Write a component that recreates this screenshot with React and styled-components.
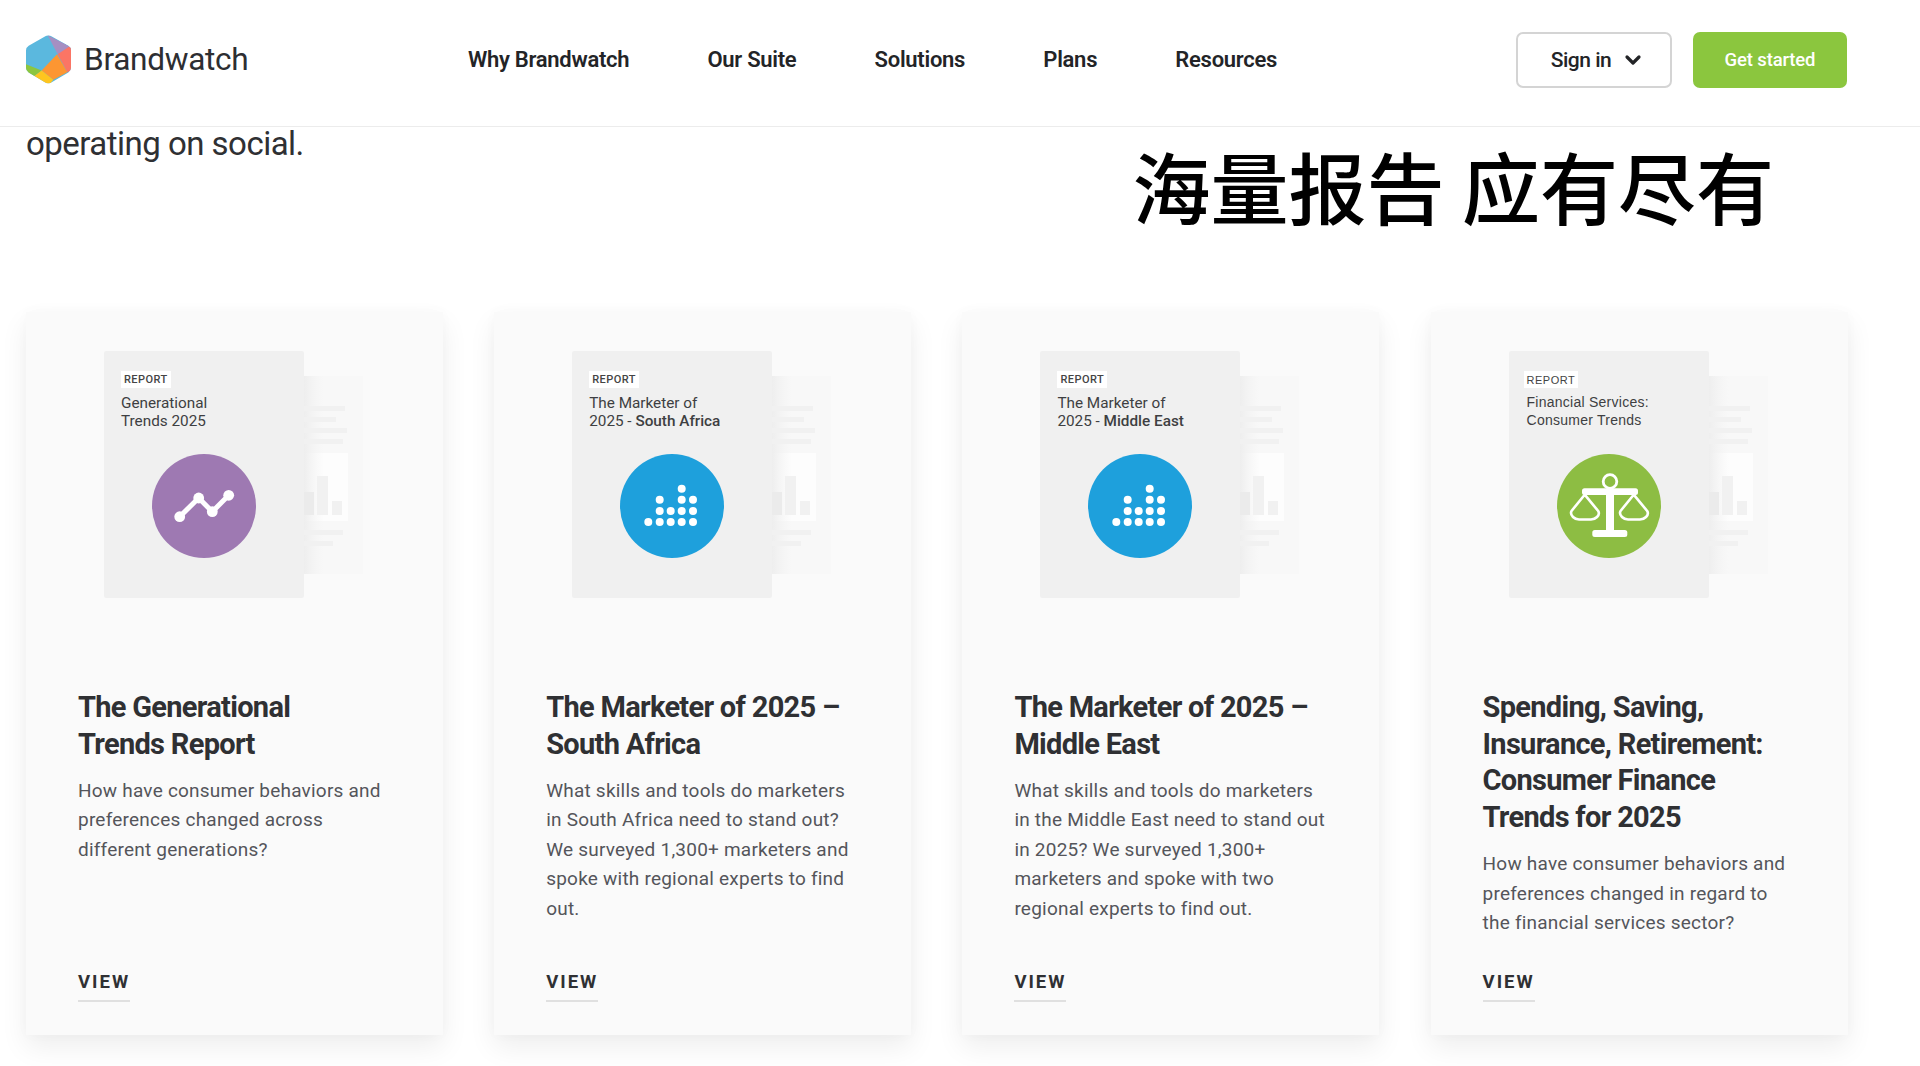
import React from "react";
import styled, { createGlobalStyle } from "styled-components";
import { ChevronDown } from "lucide-react";

const GlobalStyle = createGlobalStyle`
  html, body {
    margin: 0;
    height: 100%;
    background: #fff;
    overflow: hidden;
  }
  body {
    font-family: Roboto, "Liberation Sans", sans-serif;
    color: #2f3033;
  }
  * {
    box-sizing: border-box;
  }
`;

const Page = styled.div`
  width: 1920px;
  height: 1066px;
  overflow: hidden;
`;

const Header = styled.header`
  height: 127px;
  padding: 0 73px 7px 26px;
  display: flex;
  align-items: center;
  border-bottom: 1px solid #ececec;
`;

const LogoLink = styled.a`
  width: 223px;
  flex: none;
  display: flex;
  align-items: center;
  gap: 13px;
  font-size: 31.6px;
  letter-spacing: -0.3px;
  white-space: nowrap;
  color: #2d2e32;

  svg {
    flex: none;
  }
`;

const Nav = styled.nav`
  margin-left: 219px;
  display: flex;
  gap: 78.2px;
`;

const NavItem = styled.a`
  font-size: 22px;
  font-weight: 600;
  letter-spacing: -0.28px;
  color: #232427;
`;

const Actions = styled.div`
  margin-left: auto;
  display: flex;
  gap: 21px;
`;

const SignIn = styled.button`
  width: 156px;
  height: 56px;
  padding: 0 0 0 8px;
  display: flex;
  align-items: center;
  justify-content: center;
  gap: 10px;
  background: #fff;
  border: 2px solid #d4d4d4;
  border-radius: 7px;
  font-family: inherit;
  font-size: 21px;
  font-weight: 500;
  letter-spacing: -0.5px;
  color: #232427;
`;

const GetStarted = styled.button`
  width: 154px;
  height: 56px;
  padding: 0;
  background: #8bc63e;
  border: 0;
  border-radius: 7px;
  font-family: inherit;
  font-size: 18.5px;
  font-weight: 500;
  letter-spacing: -0.15px;
  color: #fff;
`;

const Hero = styled.section`
  height: 185px;
  padding: 0 146px 0 26px;
  display: flex;
  justify-content: space-between;
`;

const HeroText = styled.p`
  margin: -1px 0 0;
  font-size: 33px;
  font-weight: 400;
  line-height: 36px;
  letter-spacing: -0.52px;
  color: #2f3033;
`;

const HeroTitle = styled.h1`
  margin: 10px 0 0;
  font-family: "Noto Sans CJK SC", sans-serif;
  font-size: 78px;
  font-weight: 500;
  line-height: 96px;
  color: #000;
`;

const CardGrid = styled.section`
  padding: 0 72px 0 26px;
  display: grid;
  grid-template-columns: repeat(4, 417px);
  gap: 51.2px;
`;

const Card = styled.article`
  height: 723px;
  padding: 39px 52px 33px;
  display: flex;
  flex-direction: column;
  background: #fafafa;
  box-shadow: 0 12px 26px rgba(0, 0, 0, 0.07), 0 0 12px rgba(0, 0, 0, 0.025);
`;

const Artwork = styled.div`
  margin-bottom: 91px;
  padding-right: 2px;
  display: flex;
  align-items: center;
  justify-content: center;
`;

const Cover = styled.div`
  width: 200px;
  height: 247px;
  padding: ${(p) => (p.$alt ? "20px 15px 0" : "20px 17px 0")};
  display: flex;
  flex-direction: column;
  align-items: flex-start;
  background: #f0f0f0;
  border-radius: 2px;
`;

const Badge = styled.span`
  height: 17px;
  padding: 0 3px;
  display: flex;
  align-items: center;
  background: #fff;
  font-family: ${(p) => (p.$alt ? '"Liberation Sans", sans-serif' : "inherit")};
  font-size: 11px;
  font-weight: ${(p) => (p.$alt ? 400 : 500)};
  letter-spacing: ${(p) => (p.$alt ? "0.5px" : "0.45px")};
  color: #444;
`;

const CoverTitle = styled.div`
  margin: ${(p) => (p.$alt ? "5px 0 0 3px" : "6px 0 0")};
  font-family: ${(p) => (p.$alt ? '"Liberation Sans", sans-serif' : "inherit")};
  font-size: ${(p) => (p.$alt ? "14px" : "15.3px")};
  line-height: 18px;
  letter-spacing: ${(p) => (p.$alt ? "0.25px" : "0")};
  color: #3e3f42;

  b {
    font-weight: 500;
  }
`;

const Circle = styled.div`
  width: 104px;
  height: 104px;
  margin: ${(p) => (p.$alt ? "25px" : "24px")} auto 0;
  flex: none;
  border-radius: 50%;
  background: ${(p) => p.$color};
`;

const CardTitle = styled.h2`
  margin: 0 0 13.5px;
  font-size: 29px;
  font-weight: 700;
  line-height: 36.7px;
  letter-spacing: -0.7px;
  color: #2f3033;
`;

const CardText = styled.p`
  margin: 0;
  font-size: 19px;
  line-height: 29.4px;
  letter-spacing: 0.22px;
  color: #54555a;
`;

const ViewLink = styled.a`
  margin-top: auto;
  padding-bottom: 5px;
  align-self: flex-start;
  border-bottom: 2px solid #e0e0e0;
  font-size: 18.5px;
  font-weight: 700;
  line-height: 26px;
  letter-spacing: 2px;
  color: #2f3033;
`;

function BrandLogo() {
  return (
    <svg width="45" height="49" viewBox="48 46 135 146">
      <defs>
        <clipPath id="hex">
          <path d="M106 49 Q115 44 124 49 L175 78 Q183 83 183 92 L183 144 Q183 153 175 158 L124 188 Q115 194 106 188 L56 158 Q48 153 48 144 L48 92 Q48 83 56 78 Z" />
        </clipPath>
      </defs>
      <g clipPath="url(#hex)">
        <rect x="48" y="46" width="135" height="146" fill="#5bb8de" />
        <polygon points="113,46 190,85 143,103" fill="#a68fc2" />
        <polygon points="178,80 190,85 190,150 172,157 143,103" fill="#fb7565" />
        <polygon points="141,103 172,157 130,180 95,152" fill="#fd9632" />
        <polygon points="40,130 95,152 68,172 40,150" fill="#8cc63f" />
        <polygon points="95,152 130,180 113,200 68,172" fill="#fec51f" />
      </g>
    </svg>
  );
}

function TrendIcon() {
  return (
    <svg width="104" height="104" viewBox="-52 -52 104 104" fill="#fff" stroke="#fff">
      <polyline points="-24.3,10.7 -5.3,-8 8.3,5.7 24.7,-10.7" fill="none" strokeWidth="5" />
      <circle cx="-24.3" cy="10.7" r="5.4" stroke="none" />
      <circle cx="-5.3" cy="-8" r="5.4" stroke="none" />
      <circle cx="8.3" cy="5.7" r="5.4" stroke="none" />
      <circle cx="24.7" cy="-10.7" r="5.4" stroke="none" />
    </svg>
  );
}

const dotX = [-23.7, -12.3, -1.3, 9.7, 21];
const dotRows = [
  { y: 16, cols: [0, 1, 2, 3, 4] },
  { y: 5, cols: [1, 2, 3, 4] },
  { y: -6.3, cols: [1, 3, 4] },
  { y: -17.3, cols: [3] },
];

function DotsIcon() {
  return (
    <svg width="104" height="104" viewBox="-52 -52 104 104" fill="#fff">
      {dotRows.map((row) =>
        row.cols.map((c) => <circle key={`${row.y}-${c}`} cx={dotX[c]} cy={row.y} r="4" />)
      )}
    </svg>
  );
}

function ScaleIcon() {
  return (
    <svg width="104" height="104" viewBox="-52 -52 104 104" fill="none" stroke="#fff" strokeWidth="2.6" strokeLinejoin="round">
      <circle cx="1" cy="-24.5" r="6.8" strokeWidth="2.8" />
      <rect x="-27" y="-17.7" width="56" height="6.6" rx="2.5" fill="#fff" stroke="none" />
      <rect x="-3" y="-12" width="8" height="37" fill="#fff" stroke="none" />
      <rect x="-16.7" y="24" width="35" height="7" rx="2.5" fill="#fff" stroke="none" />
      <path d="M-24.3 -11.3 L-37.5 5 Q-39 8 -36 11 Q-33.5 13.5 -30 13.5 H-18 Q-14.5 13.5 -12 11 Q-9 8 -10.8 5 Z" />
      <path d="M24.7 -11.3 L11.5 5 Q10 8 13 11 Q15.5 13.5 19 13.5 H31 Q34.5 13.5 37 11 Q40 8 38.2 5 Z" />
    </svg>
  );
}

function BackSheet() {
  return (
    <svg width="59" height="198" viewBox="0 0 59 198">
      <defs>
        <linearGradient id="sheetShade" x1="0" x2="1" y1="0" y2="0">
          <stop offset="0" stopColor="#eeeeee" />
          <stop offset="1" stopColor="#f3f3f3" stopOpacity="0" />
        </linearGradient>
      </defs>
      <rect width="59" height="198" fill="#f8f8f8" />
      <rect x="0" y="77" width="44" height="68" fill="#fdfdfd" />
      <rect width="20" height="198" fill="url(#sheetShade)" />
      <rect x="0" y="30" width="41" height="5" fill="#f1f1f1" />
      <rect x="0" y="41" width="32" height="5" fill="#f1f1f1" />
      <rect x="0" y="52" width="43" height="5" fill="#f1f1f1" />
      <rect x="0" y="63" width="39" height="5" fill="#f1f1f1" />
      <rect x="0" y="116" width="10" height="23" fill="#ebebeb" />
      <rect x="13" y="100" width="11" height="39" fill="#f1f1f1" />
      <rect x="28" y="125" width="10" height="14" fill="#f1f1f1" />
      <rect x="0" y="154" width="39" height="5" fill="#f1f1f1" />
      <rect x="0" y="165" width="29" height="5" fill="#f1f1f1" />
    </svg>
  );
}

const reports = [
  {
    cover: <>Generational<br />Trends 2025</>,
    color: "#9e79b2",
    icon: <TrendIcon />,
    title: <>The Generational<br />Trends Report</>,
    text: <>How have consumer behaviors and<br />preferences changed across<br />different generations?</>,
  },
  {
    cover: <>The Marketer of<br />2025 - <b>South Africa</b></>,
    color: "#1ea0dc",
    icon: <DotsIcon />,
    title: <>The Marketer of 2025 –<br />South Africa</>,
    text: <>What skills and tools do marketers<br />in South Africa need to stand out?<br />We surveyed 1,300+ marketers and<br />spoke with regional experts to find<br />out.</>,
  },
  {
    cover: <>The Marketer of<br />2025 - <b>Middle East</b></>,
    color: "#1ea0dc",
    icon: <DotsIcon />,
    title: <>The Marketer of 2025 –<br />Middle East</>,
    text: <>What skills and tools do marketers<br />in the Middle East need to stand out<br />in 2025? We surveyed 1,300+<br />marketers and spoke with two<br />regional experts to find out.</>,
  },
  {
    alt: true,
    cover: <>Financial Services:<br />Consumer Trends</>,
    color: "#8dbd43",
    icon: <ScaleIcon />,
    title: <>Spending, Saving,<br />Insurance, Retirement:<br />Consumer Finance<br />Trends for 2025</>,
    text: <>How have consumer behaviors and<br />preferences changed in regard to<br />the financial services sector?</>,
  },
];

const navItems = ["Why Brandwatch", "Our Suite", "Solutions", "Plans", "Resources"];

export default function App() {
  return (
    <Page>
      <GlobalStyle />
      <Header>
        <LogoLink>
          <BrandLogo />
          Brandwatch
        </LogoLink>
        <Nav>
          {navItems.map((item) => (
            <NavItem key={item}>{item}</NavItem>
          ))}
        </Nav>
        <Actions>
          <SignIn>
            Sign in
            <ChevronDown size={24} strokeWidth={3.2} />
          </SignIn>
          <GetStarted>Get started</GetStarted>
        </Actions>
      </Header>
      <Hero>
        <HeroText>operating on social.</HeroText>
        <HeroTitle>海量报告 应有尽有</HeroTitle>
      </Hero>
      <CardGrid>
        {reports.map((report, i) => (
          <Card key={i}>
            <Artwork>
              <Cover $alt={report.alt}>
                <Badge $alt={report.alt}>REPORT</Badge>
                <CoverTitle $alt={report.alt}>{report.cover}</CoverTitle>
                <Circle $alt={report.alt} $color={report.color}>{report.icon}</Circle>
              </Cover>
              <BackSheet />
            </Artwork>
            <CardTitle>{report.title}</CardTitle>
            <CardText>{report.text}</CardText>
            <ViewLink>VIEW</ViewLink>
          </Card>
        ))}
      </CardGrid>
    </Page>
  );
}
